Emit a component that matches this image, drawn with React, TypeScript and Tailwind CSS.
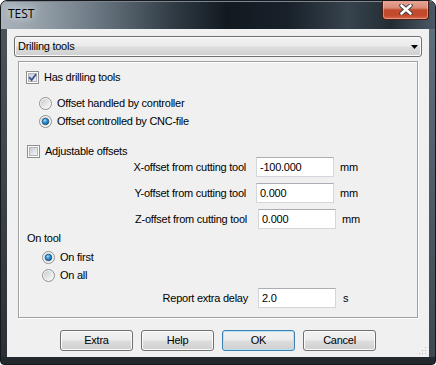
import React from 'react';

const txt = "font-['Liberation_Sans',Arial,sans-serif] text-[11px] tracking-[-0.25px] text-black leading-none";

function CheckBox({ checked }: { checked?: boolean }) {
  return (
    <svg width="13" height="13" viewBox="0 0 13 13" className="shrink-0">
      <defs>
        <linearGradient id="cbFill" x1="0" y1="0" x2="1" y2="1">
          <stop offset="0" stopColor="#c6cad0" />
          <stop offset="1" stopColor="#f7f7f7" />
        </linearGradient>
      </defs>
      <rect x="0.5" y="0.5" width="12" height="12" fill="#fdfdfd" stroke="#8e8f8f" />
      <rect x="2.5" y="2.5" width="8" height="8" fill="url(#cbFill)" stroke="#b2b6bb" />
      {checked && <path d="M3.2 6.2 L5.6 9 L10 3.2" fill="none" stroke="#3c5390" strokeWidth="1.9" />}
    </svg>
  );
}

function Radio({ checked }: { checked?: boolean }) {
  return (
    <svg width="13" height="13" viewBox="0 0 13 13" className="shrink-0">
      <defs>
        <linearGradient id="rbFill" x1="0" y1="0" x2="1" y2="1">
          <stop offset="0" stopColor="#c8cbcf" />
          <stop offset="1" stopColor="#fafafa" />
        </linearGradient>
        <radialGradient id="rbDot" cx="0.4" cy="0.35" r="0.75">
          <stop offset="0" stopColor="#9cdcfb" />
          <stop offset="0.45" stopColor="#2d8fd2" />
          <stop offset="1" stopColor="#0b4575" />
        </radialGradient>
      </defs>
      <circle cx="6.5" cy="6.5" r="6" fill="#f6f6f6" stroke="#8e8f8f" />
      <circle cx="6.5" cy="6.5" r="4.6" fill="url(#rbFill)" />
      {checked && <circle cx="6.5" cy="6.5" r="3.3" fill="url(#rbDot)" stroke="#1d4d78" strokeWidth="0.7" />}
    </svg>
  );
}

function Field({ value }: { value: string }) {
  return (
    <div className={`w-[78px] h-[20px] bg-white border border-[#d3d6da] border-t-[#abadb3] flex items-center pl-[3px] ${txt}`}>
      {value}
    </div>
  );
}

function OffsetRow({ label, value, unit, labelW, gap, unitGap, top }: { label: string; value: string; unit: string; labelW: string; gap: string; unitGap: string; top: string }) {
  return (
    <div className={`flex items-center h-[20px] ${top}`}>
      <div className={`${labelW} text-right ${txt}`}>{label}</div>
      <div className={gap}>
        <Field value={value} />
      </div>
      <div className={`${unitGap} ${txt}`}>{unit}</div>
    </div>
  );
}

function Btn({ label, def }: { label: string; def?: boolean }) {
  return (
    <div
      className={`w-[73px] h-[21px] rounded-[3px] border flex items-center justify-center bg-[linear-gradient(180deg,#f2f2f2_0%,#ebebeb_48%,#dddddd_52%,#cfcfcf_100%)] ${
        def ? 'border-[#3c7fb1] shadow-[inset_0_0_0_1px_#b9e1f6]' : 'border-[#707070] shadow-[inset_0_0_0_1px_#fbfbfb]'
      } ${txt}`}
    >
      {label}
    </div>
  );
}

export default function App() {
  return (
    <div className="w-[436px] h-[365px] flex flex-col rounded-t-[7px] rounded-b-[4px] border border-[#15191d] bg-[linear-gradient(180deg,#4a535b_0%,#2e353b_40%,#22282d_100%)] overflow-hidden">
      {/* title bar */}
      <div className="h-[28px] flex items-start bg-[linear-gradient(90deg,#a9b3bb_0%,#949fa8_9%,#6b7782_22%,#2f3a43_40%,#121a20_52%,#18212a_66%,#37434d_80%,#222c34_90%,#4c5966_100%)] shadow-[inset_0_1px_0_#7c868e]">
        <div className="ml-[7px] mt-[7px] font-['Open_Sans',sans-serif] text-[12px] leading-none text-black [text-shadow:0_0_6px_#e8edf1,0_0_10px_#dfe5ea]">
          TEST
        </div>
        <div className="ml-auto mr-[6px] mt-[-1px] w-[47px] h-[20px] rounded-b-[4px] border border-t-0 border-[#4b1d14] bg-[linear-gradient(180deg,#e9a898_0%,#d98b78_42%,#c14a2e_52%,#c3492c_80%,#d66a4c_100%)] shadow-[inset_0_0_0_1px_rgba(255,210,200,0.45)] flex items-center justify-center">
          <svg width="14" height="11" viewBox="0 0 14 11">
            <path d="M2.5 1.5 L11.5 9.5 M11.5 1.5 L2.5 9.5" stroke="#3b3b3b" strokeWidth="4.4" strokeLinecap="round" />
            <path d="M2.5 1.5 L11.5 9.5 M11.5 1.5 L2.5 9.5" stroke="#ffffff" strokeWidth="2.6" strokeLinecap="round" />
          </svg>
        </div>
      </div>

      <div className="flex h-[328px]">
        <div className="w-[6px] bg-[linear-gradient(180deg,#4c545b,#2a3035)]" />
        {/* client */}
        <div className="relative w-[422px] h-[328px] bg-[#f0f0f0] flex flex-col px-[7px] pt-[7px]">
          {/* combo */}
          <div className={`h-[21px] rounded-[3px] border border-[#707070] shadow-[inset_0_0_0_1px_#fbfbfb] bg-[linear-gradient(180deg,#f2f2f2_0%,#ebebeb_48%,#dddddd_52%,#cfcfcf_100%)] flex items-center pl-[3px] pr-[3px] ${txt}`}>
            <span>Drilling tools</span>
            <svg className="ml-auto" width="7" height="4" viewBox="0 0 7 4">
              <path d="M0 0 H7 L3.5 4 Z" fill="#000" />
            </svg>
          </div>

          {/* group panel */}
          <div className="mt-[4px] ml-[4px] w-[400px] h-[257px] border border-[#a0a0a0] shadow-[inset_1px_1px_0_#ffffff,1px_1px_0_#ffffff] flex flex-col">
            <div className="mt-[9px] ml-[7px] h-[13px] flex items-center gap-[5px]">
              <CheckBox checked />
              <span className={txt}>Has drilling tools</span>
            </div>
            <div className="mt-[13px] ml-[20px] h-[13px] flex items-center gap-[5px]">
              <Radio />
              <span className={txt}>Offset handled by controller</span>
            </div>
            <div className="mt-[5px] ml-[20px] h-[13px] flex items-center gap-[5px]">
              <Radio checked />
              <span className={txt}>Offset controlled by CNC-file</span>
            </div>
            <div className="mt-[17px] ml-[8px] h-[13px] flex items-center gap-[5px]">
              <CheckBox />
              <span className={txt}>Adjustable offsets</span>
            </div>

            <OffsetRow top="mt-[-1px]" label="X-offset from cutting tool" value="-100.000" unit="mm" labelW="w-[227px]" gap="ml-[10px]" unitGap="ml-[6px]" />
            <OffsetRow top="mt-[6px]" label="Y-offset from cutting tool" value="0.000" unit="mm" labelW="w-[227px]" gap="ml-[10px]" unitGap="ml-[6px]" />
            <OffsetRow top="mt-[6px]" label="Z-offset from cutting tool" value="0.000" unit="mm" labelW="w-[228px]" gap="ml-[11px]" unitGap="ml-[6px]" />

            <div className={`mt-[3px] ml-[8px] h-[13px] flex items-center ${txt}`}>On tool</div>
            <div className="mt-[6px] ml-[23px] h-[13px] flex items-center gap-[5px]">
              <Radio checked />
              <span className={txt}>On first</span>
            </div>
            <div className="mt-[5px] ml-[23px] h-[13px] flex items-center gap-[5px]">
              <Radio />
              <span className={txt}>On all</span>
            </div>

            <OffsetRow top="mt-[6px]" label="Report extra delay" value="2.0" unit="s" labelW="w-[229px]" gap="ml-[10px]" unitGap="ml-[7px]" />
          </div>

          {/* buttons */}
          <div className="mt-[12px] ml-[46px] flex gap-[8px]">
            <Btn label="Extra" />
            <Btn label="Help" />
            <Btn label="OK" def />
            <Btn label="Cancel" />
          </div>

          {/* size grip */}
          <svg className="absolute right-[2px] bottom-[2px]" width="8" height="8" viewBox="0 0 8 8">
            <rect x="6" y="0" width="1" height="1" fill="#b8b8b8" />
            <rect x="3" y="3" width="1" height="1" fill="#b8b8b8" />
            <rect x="6" y="3" width="1" height="1" fill="#b8b8b8" />
            <rect x="0" y="6" width="1" height="1" fill="#b8b8b8" />
            <rect x="3" y="6" width="1" height="1" fill="#b8b8b8" />
            <rect x="6" y="6" width="1" height="1" fill="#b8b8b8" />
          </svg>
        </div>
        <div className="w-[6px] bg-[linear-gradient(180deg,#5e6f7c,#3d4952)]" />
      </div>
    </div>
  );
}
